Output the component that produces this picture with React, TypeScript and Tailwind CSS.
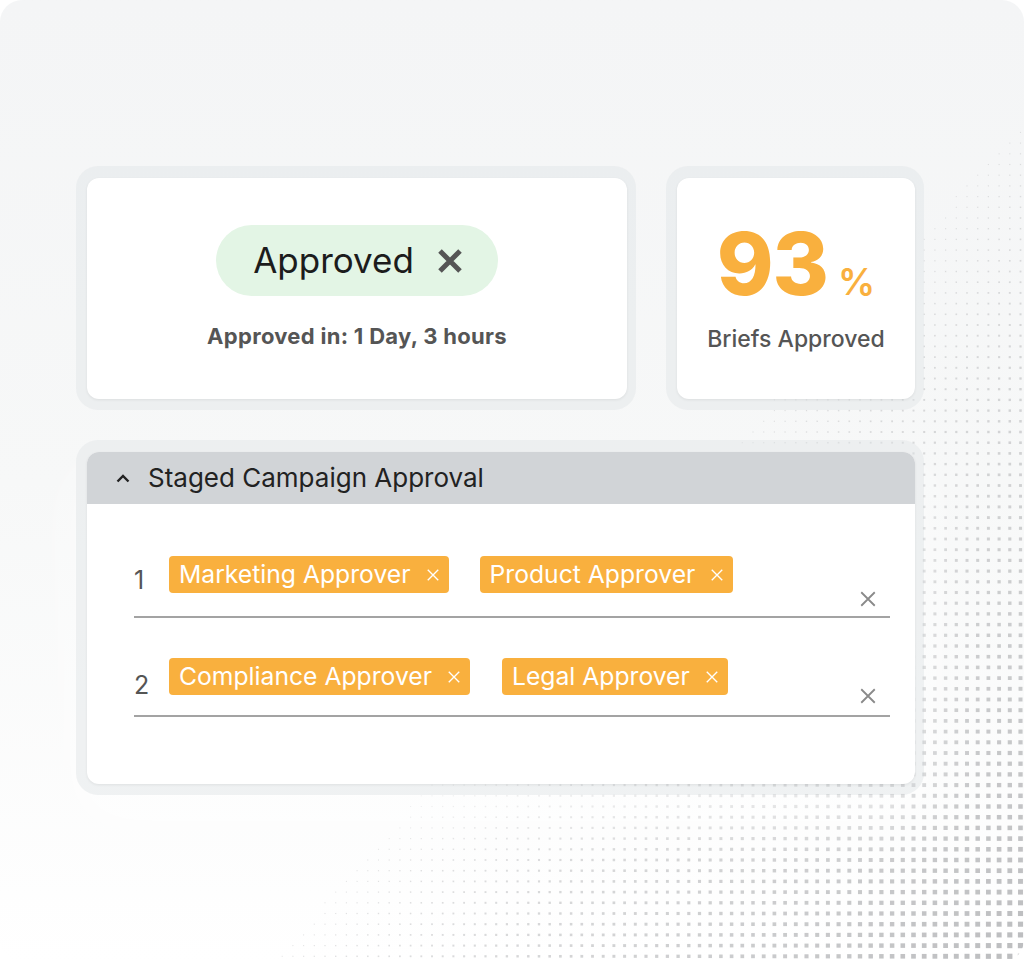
import React from "react";

const ORANGE = "#f9b03e";

function Dots() {
  const rects: React.ReactElement[] = [];
  const step = 10.7;
  for (let gy = 0; gy < 92; gy++) {
    for (let gx = 0; gx < 97; gx++) {
      const x = gx * step + 4;
      const y = gy * step + 4;
      const t = ((x - 1024) * 832 + (y - 120) * 744) / 1116;
      if (t <= 0) continue;
      const f = Math.min(t / 555, 1);
      const s = 1 + 4.3 * f;
      const o = 0.4 + 0.55 * f;
      rects.push(
        <rect
          key={gx + "-" + gy}
          x={x - s / 2}
          y={y - s / 2}
          width={s}
          height={s}
          fill="#b9babc"
          opacity={o}
        />
      );
    }
  }
  return (
    <svg className="absolute inset-0" width="1024" height="962" viewBox="0 0 1024 962">
      {rects}
    </svg>
  );
}

function SmallX({ color, size, stroke }: { color: string; size: number; stroke: number }) {
  return (
    <svg width={size} height={size} viewBox="0 0 16 16" fill="none">
      <path d="M2 2L14 14M14 2L2 14" stroke={color} strokeWidth={stroke} strokeLinecap="butt" />
    </svg>
  );
}

function Tag({ label }: { label: string }) {
  return (
    <div
      className="h-[37px] rounded-[4px] pl-[10px] pr-[9px] flex items-center gap-[15px] text-white text-[24.7px] leading-none"
      style={{ backgroundColor: ORANGE }}
    >
      <span>{label}</span>
      <SmallX color="#ffffff" size={14} stroke={1.6} />
    </div>
  );
}

export default function App() {
  return (
    <div
      className="relative w-[1024px] h-[962px] overflow-hidden rounded-[22px] bg-gradient-to-b from-[#f4f5f6] via-[#f7f8f8] to-white"
      style={{ fontFamily: "Inter, 'Noto Sans', sans-serif" }}
    >
      <Dots />
      <div className="relative pt-[166px] pl-[76px]">
        <div className="flex gap-[30px]">
          {/* Card 1 */}
          <div className="w-[560px] h-[244px] rounded-[22px] bg-[rgba(224,228,231,0.45)] pl-[11px] pr-[9px] pt-[12px] pb-[11px]">
            <div className="w-full h-full bg-white rounded-[12px] shadow-[0_1px_3px_rgba(0,0,0,0.07)] flex flex-col items-center pt-[47px]">
              <div className="h-[71px] rounded-full bg-[#e3f5e5] pl-[37px] pr-[34px] flex items-center gap-[22px]">
                <span className="text-[35px] leading-none text-[#1c1c1c]">Approved</span>
                <svg width="28" height="28" viewBox="0 0 28 28" fill="none">
                  <path d="M4 4L24 24M24 4L4 24" stroke="#555555" strokeWidth="5" />
                </svg>
              </div>
              <div className="mt-[26px] text-[22px] leading-[28px] font-bold tracking-[0.3px] text-[#555555]">
                Approved in: 1 Day, 3 hours
              </div>
            </div>
          </div>
          {/* Card 2 */}
          <div className="w-[258px] h-[244px] rounded-[22px] bg-[rgba(224,228,231,0.45)] pl-[11px] pr-[9px] pt-[12px] pb-[11px]">
            <div className="w-full h-full bg-white rounded-[12px] shadow-[0_1px_3px_rgba(0,0,0,0.07)] flex flex-col items-center pt-[43px]">
              <div className="flex items-baseline" style={{ color: ORANGE }}>
                <span className="text-[86px] leading-none font-extrabold tracking-[-1px]">93</span>
                <span className="text-[37px] leading-none font-semibold ml-[10px]">%</span>
              </div>
              <div className="mt-[18px] text-[23px] leading-[28px] font-medium text-[#555555]">
                Briefs Approved
              </div>
            </div>
          </div>
        </div>
        {/* Card 3 */}
        <div className="mt-[30px] w-[848px] h-[355px] rounded-[22px] bg-[rgba(224,228,231,0.45)] pl-[11px] pr-[9px] pt-[12px] pb-[11px] shadow-[0_30px_60px_rgba(255,255,255,0.6)]">
          <div className="w-full h-full bg-white rounded-[12px] overflow-hidden shadow-[0_1px_3px_rgba(0,0,0,0.07)]">
            <div className="h-[52px] bg-[#d1d4d7] flex items-center pl-[29px] gap-[18px]">
              <svg width="14" height="9" viewBox="0 0 14 9" fill="none">
                <path d="M1.5 7.5L7 2L12.5 7.5" stroke="#222222" strokeWidth="2.4" />
              </svg>
              <span className="text-[26px] leading-none text-[#222222]">Staged Campaign Approval</span>
            </div>
            <div className="pl-[47px] pr-[25px] pt-[52px]">
              <div className="h-[62px] border-b-2 border-[#a3a3a3] flex items-start">
                <span className="w-[35px] mt-[8px] text-[25px] leading-[32px] text-[#555555]">1</span>
                <div className="flex gap-[31px]">
                  <Tag label="Marketing Approver" />
                  <Tag label="Product Approver" />
                </div>
                <div className="ml-auto mt-[34px] mr-[13px]">
                  <SmallX color="#8a8a8a" size={18} stroke={1.6} />
                </div>
              </div>
              <div className="mt-[40px] h-[59px] border-b-2 border-[#a3a3a3] flex items-start">
                <span className="w-[35px] mt-[11px] text-[25px] leading-[32px] text-[#555555]">2</span>
                <div className="flex gap-[32px]">
                  <Tag label="Compliance Approver" />
                  <Tag label="Legal Approver" />
                </div>
                <div className="ml-auto mt-[29px] mr-[13px]">
                  <SmallX color="#8a8a8a" size={18} stroke={1.6} />
                </div>
              </div>
            </div>
          </div>
        </div>
      </div>
    </div>
  );
}
